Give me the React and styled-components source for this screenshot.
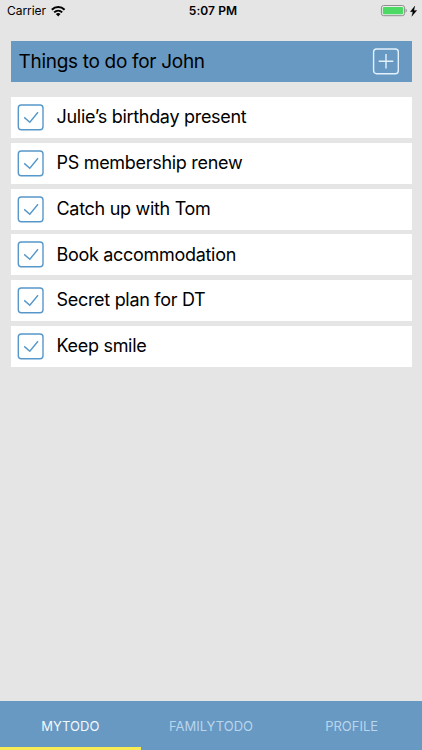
import styled, { createGlobalStyle } from 'styled-components';

const GlobalStyle = createGlobalStyle`
body {
    margin:0;
    background:#e5e5e5;
    font-family:Inter, "Liberation Sans", sans-serif;
    color:#000;
}
* {
    box-sizing:border-box;
}
`;

const Screen = styled.div`
height:750px;
display:flex;
flex-direction:column;
overflow:hidden;
`;

const StatusBar = styled.div`
height:22px;
padding:0 5px 0 7px;
display:grid;
grid-template-columns:1fr auto 1fr;
align-items:center;
font-size:12px;
line-height:22px;
svg {
    display:block;
}
`;

const Carrier = styled.div`
display:flex;
align-items:center;
gap:5px;
letter-spacing:-0.05px;
`;

const Clock = styled.div`
font-weight:600;
letter-spacing:0.1px;
padding-left:2px;
`;

const Power = styled.div`
display:flex;
align-items:center;
justify-content:flex-end;
gap:3px;
`;

const Content = styled.div`
flex:1;
padding:19px 10.5px 0;
`;

const Header = styled.div`
height:41px;
padding:0 13px 0 8px;
display:flex;
align-items:center;
justify-content:space-between;
background:#6899c3;
margin-bottom:15px;
`;

const TodoList = styled.div`
display:flex;
flex-direction:column;
gap:4.8px;
`;

const TodoRow = styled.div`
height:41px;
padding-left:6px;
display:flex;
align-items:center;
gap:13px;
background:#fff;
`;

const Label = styled.div`
font-size:${props => props.$title ? '19px' : '18px'};
line-height:24px;
white-space:nowrap;
letter-spacing:${props => props.$title ? '-0.3px' : '-0.3px'};
padding-bottom:${props => props.$title ? '0' : '0.6px'};
`;

const IconBox = styled.svg`
width:27px;
height:27px;
flex:none;
display:block;
fill:none;
stroke:${props => props.$color};
stroke-width:1.4;
`;

const TabBar = styled.div`
height:49px;
display:grid;
grid-template-columns:repeat(3, 1fr);
background:#6899c3;
`;

const Tab = styled.div`
display:flex;
align-items:center;
justify-content:center;
padding-top:3px;
font-size:13px;
letter-spacing:0;
color:${props => props.$active ? '#f3f8fc' : '#b9d5ec'};
border-bottom:3px solid ${props => props.$active ? '#f8eb54' : 'transparent'};
`;

const todos = [
    'Julie’s birthday present',
    'PS membership renew',
    'Catch up with Tom',
    'Book accommodation',
    'Secret plan for DT',
    'Keep smile',
];

const tabs = ['MYTODO', 'FAMILYTODO', 'PROFILE'];

const WifiIcon = () => (
    <svg width="15" height="11" viewBox="0 0 15 11" fill="none" stroke="#000" strokeWidth="2">
        <path d="M.8 3.8C4.4.1 10 .1 13.6 3.8" />
        <path d="M3.2 6.4c2.3-2.2 5.7-2.2 8 0" />
        <path d="M4.9 8c1.3-1.2 3.3-1.2 4.6 0L7.2 10.4z" fill="#000" stroke="none" />
    </svg>
);

const BatteryIcon = () => (
    <svg width="27" height="12" viewBox="0 0 27 12">
        <rect x="1.4" y=".5" width="23.2" height="10.2" rx="2.3" fill="#ededed" stroke="#8e8e8e" />
        <rect x="2.8" y="1.9" width="20.4" height="7.4" rx="1" fill="#4cd964" />
        <path d="M25.6 3.7c1.6.5 1.6 3.3 0 3.8z" fill="#8e8e8e" />
    </svg>
);

const BoltIcon = () => (
    <svg width="7" height="11" viewBox="0 0 7 11">
        <path d="M4.8 0 .3 5.7h2.6L1.8 10.3 6.8 4.4H3.9z" stroke="#000" strokeWidth=".3" />
    </svg>
);

const CheckIcon = () => (
    <IconBox $color="#5797c9">
        <rect x="1.3" y="1" width="24.7" height="24.7" rx="3" />
        <path d="M7.2 13.4l5.6 4.9L21 8.3" />
    </IconBox>
);

const AddIcon = () => (
    <IconBox $color="#e3f1fc">
        <rect x="1.6" y="1" width="24.7" height="24.7" rx="3" />
        <path d="M14 6v14.6M6.7 13.3h14.6" />
    </IconBox>
);

function App() {
    return (
        <Screen>
            <GlobalStyle />
            <StatusBar>
                <Carrier>Carrier <WifiIcon /></Carrier>
                <Clock>5:07 PM</Clock>
                <Power><BatteryIcon /><BoltIcon /></Power>
            </StatusBar>
            <Content>
                <Header>
                    <Label $title>Things to do for John</Label>
                    <AddIcon />
                </Header>
                <TodoList>
                    {todos.map((todo) => <TodoRow key={todo}>
                        <CheckIcon />
                        <Label>{todo}</Label>
                    </TodoRow>)}
                </TodoList>
            </Content>
            <TabBar>
                {tabs.map((tab, index) => <Tab key={tab} $active={index === 0}>{tab}</Tab>)}
            </TabBar>
        </Screen>
    );
}

export default App;
